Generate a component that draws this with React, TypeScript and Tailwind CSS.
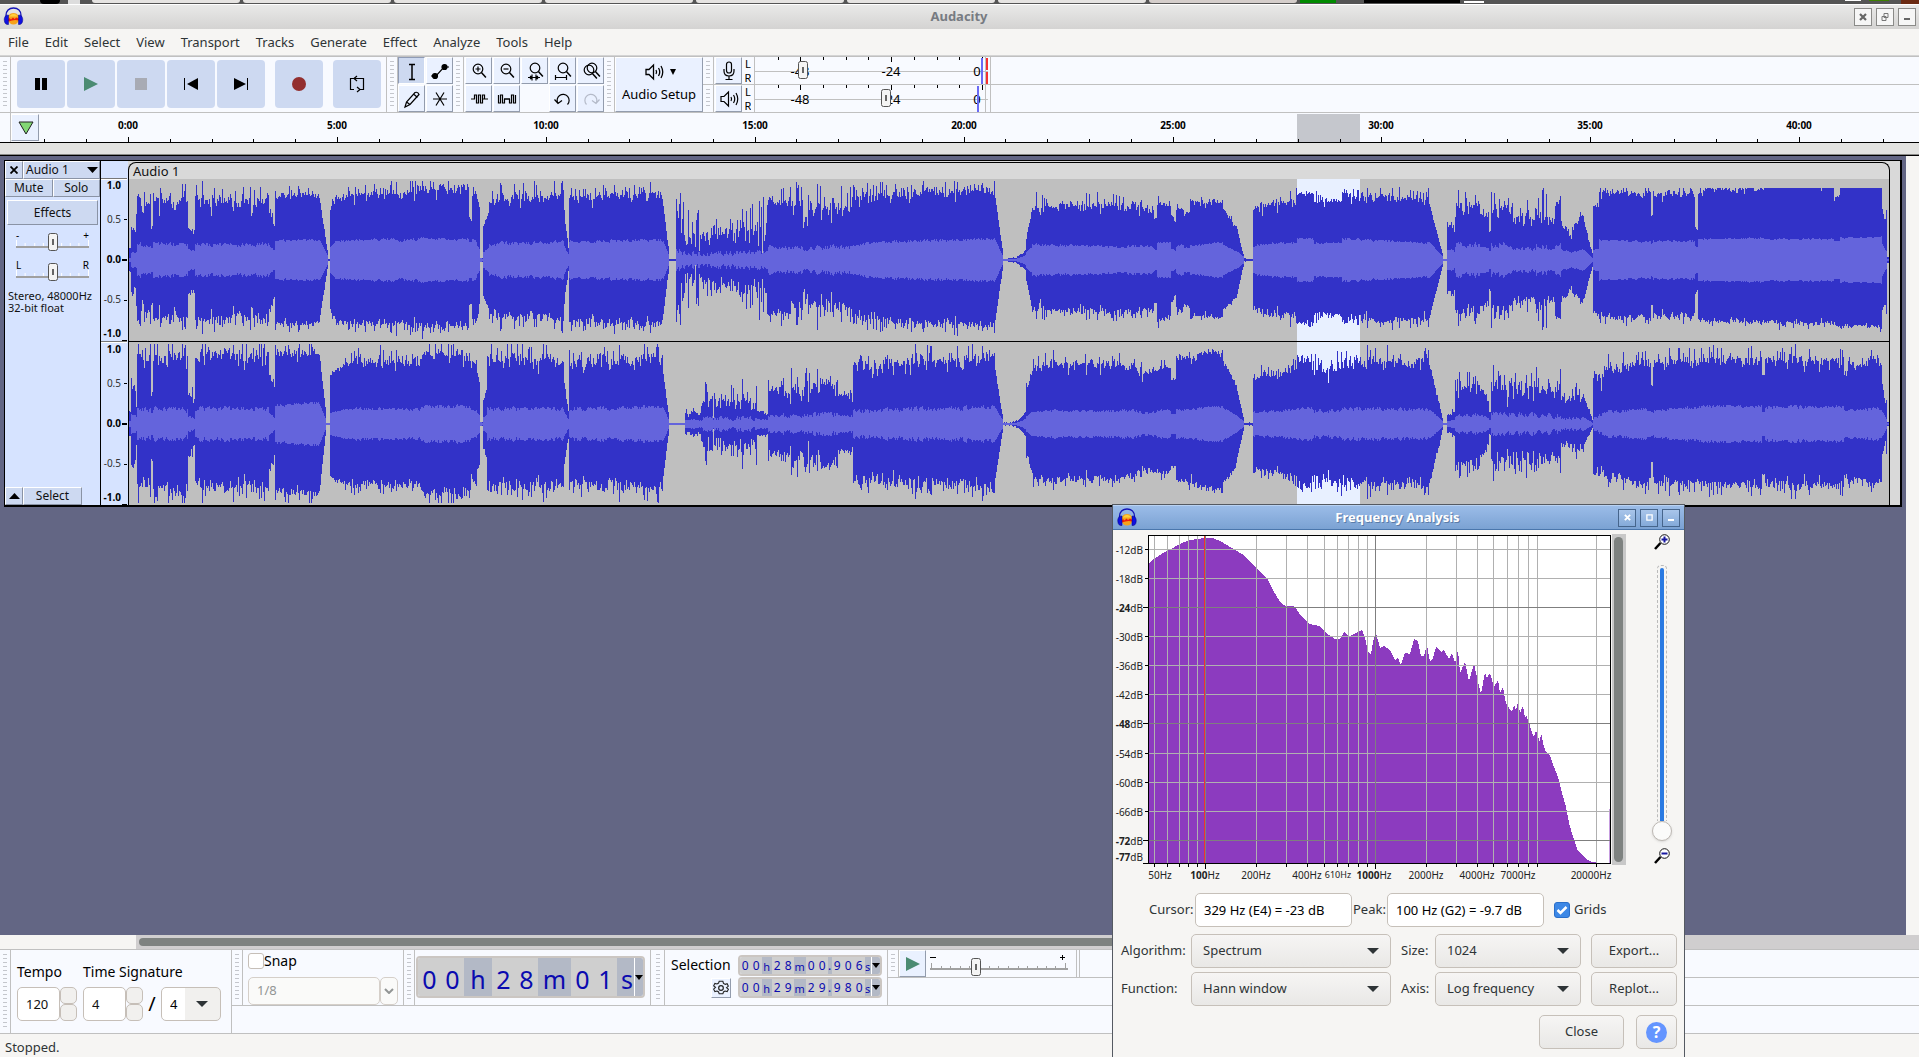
import React from "react";

/* ---------- small shared pieces ---------- */

function Logo({ className }: { className: string }) {
  return (
    <svg viewBox="0 0 20 20" className={className} aria-hidden="true">
      <path d="M5 13a5.5 5 0 1 1 10 0a5 4.500 0 0 1-10 0z" fill="#f6a21a" />
      <path d="M5.500 9.500Q10 4 14.500 9.500z" fill="#ffcf3a" />
      <path d="M4.500 13l1.500-2 1.500 1.500 2-2 1.500 1.500 2-1.500 2.500 1.500v1.500q-5-1.500-10.500 1z" fill="#ee1c0c" />
      <path d="M2.500 11.500V8.500C2.500 4 5.500 1 10 1s7.500 3 7.500 7.500v3" fill="none" stroke="#1414b8" strokeWidth="1.400" />
      <path d="M5 8C1.500 8 .5 11 .8 13.500 1 16.500 2.800 18 5 17.500z" fill="#1010e0" stroke="#05057a" strokeWidth=".5" />
      <path d="M15 8c3.500 0 4.500 3 4.200 5.500-.2 3-2 4.500-4.200 4z" fill="#1010e0" stroke="#05057a" strokeWidth=".5" />
    </svg>
  );
}

function Grabber({ className = "" }: { className?: string }) {
  return (
    <div className={"flex w-[11px] shrink-0 justify-center border-r border-[#c0c0c0] py-1 " + className}>
      <div className="w-1 bg-[repeating-linear-gradient(to_bottom,#c4c6cc_0px,#c4c6cc_1px,transparent_1px,transparent_4px)]" />
    </div>
  );
}

function ToolButton({
  label,
  children,
  pressed,
}: {
  label: string;
  children: React.ReactNode;
  pressed?: boolean;
}) {
  return (
    <button
      aria-label={label}
      className={
        "flex h-[27px] w-[27px] shrink-0 items-center justify-center border " +
        (pressed
          ? "border-[#8f9bb5] border-r-white border-b-white bg-[#cdd9f0]"
          : "border-white border-r-[#939cad] border-b-[#939cad] bg-[#eaf1ff]")
      }
    >
      <svg viewBox="0 0 24 24" className="h-6 w-6" fill="none" stroke="#000" strokeWidth="1.200">
        {children}
      </svg>
    </button>
  );
}

function SpeakerShape() {
  return (
    <>
      <path d="M4 9.500v5h3l4.500 4.500V5L7 9.500z" />
      <path d="M14 10q1.200 2 0 4M16.500 8q2.500 4 0 8M19 6q3.500 6 0 12" />
    </>
  );
}

function Thumb() {
  return (
    <svg viewBox="0 0 11 19" className="h-[19px] w-[11px]" aria-hidden="true">
      <rect x=".5" y=".5" width="9" height="17" rx="2" fill="#f4f4f4" stroke="#555" />
      <path d="M5 6v6" stroke="#666" strokeWidth="2" />
    </svg>
  );
}

/* ---------- title bar and menus ---------- */

const menus = ["File", "Edit", "Select", "View", "Transport", "Tracks", "Generate", "Effect", "Analyze", "Tools", "Help"];

function Desktop() {
  return (
    <div className="flex h-1 overflow-hidden bg-[#555]">
      <div className="flex w-[92px] shrink-0 gap-2 pl-10">
        <span className="w-5 rounded-b bg-black" />
        <span className="w-3 bg-[#ddd]" />
      </div>
      {[0, 1, 2, 3, 4, 5, 6, 7].map((i) => (
        <div
          key={i}
          className={"mr-[3px] h-[3px] w-[148px] shrink-0 rounded-b-sm " + (i === 7 ? "bg-[#d5cecb]" : "bg-[#e6e4e2]")}
        />
      ))}
      <div className="h-[3px] w-9 shrink-0 bg-[#008a00]" />
      <div className="ml-7 h-[3px] w-24 shrink-0 bg-black" />
      <div className="mt-px ml-1 h-[2px] w-5 shrink-0 bg-white" />
      <div className="flex flex-1 justify-end gap-2">
        <span className="h-px w-4 bg-white" />
        <span className="h-px w-5 bg-[#3c8000]" />
        <span className="ml-1 h-1 w-[18px] bg-[#6b2a12]" />
      </div>
    </div>
  );
}

const winBtn = "flex h-[18px] w-[18px] items-center justify-center border";

function TitleBar() {
  return (
    <header className="flex h-[25px] items-center border-t border-white bg-linear-to-b from-[#e9e9e8] to-[#d4d3d2] pr-[3px] pl-[3px]">
      <Logo className="h-5 w-[21px]" />
      <h1 className="flex-1 pl-10 text-center text-[13px] font-bold text-[#777b82]">Audacity</h1>
      <div className="flex gap-1">
        <button aria-label="Close window" className={winBtn + " border-[#8a8a88] bg-[#f6f6f6]"}>
          <svg viewBox="0 0 8 8" className="h-2 w-2" stroke="#666" strokeWidth="2.200">
            <path d="M1 1l6 6M7 1L1 7" />
          </svg>
        </button>
        <button aria-label="Restore window" className={winBtn + " border-[#8a8a88] bg-[#f6f6f6]"}>
          <svg viewBox="0 0 8 8" className="h-2 w-2" fill="none" stroke="#777">
            <path d="M3 .5h4v4H3zM1 3.500h4v4H1z" />
          </svg>
        </button>
        <button aria-label="Minimise window" className={winBtn + " border-[#8a8a88] bg-[#f6f6f6]"}>
          <svg viewBox="0 0 8 8" className="h-2 w-2">
            <path d="M1 5h6v2H1z" fill="#666" />
          </svg>
        </button>
      </div>
    </header>
  );
}

function MenuBar() {
  return (
    <nav className="flex h-[27px] items-center gap-4 border-b border-[#d4d4d4] pt-px pl-2">
      {menus.map((m) => (
        <button key={m} className="text-[13px] text-[#2e3436]">
          {m}
        </button>
      ))}
    </nav>
  );
}

/* ---------- upper toolbars ---------- */

function TransportButton({ label, children, className = "" }: { label: string; children: React.ReactNode; className?: string }) {
  return (
    <button aria-label={label} className={"flex h-12 w-12 items-center justify-center rounded bg-[#cdd9f1] " + className}>
      <svg viewBox="0 0 20 20" className="h-5 w-5">
        {children}
      </svg>
    </button>
  );
}

function Meter({ thumb, peak, clip, name }: { thumb: number; peak: number; clip: boolean; name: string }) {
  const ticks = [24, 46, 69, 92, 114, 137, 160, 183, 205, 228];
  return (
    <div className="relative h-[27px] w-[238px]">
      <svg className="h-full w-full font-['Noto_Sans',sans-serif]" role="img" aria-label={name}>
        <path d="M.5 0v27M231.500 0v27M236.500 0v27M0 14.500h234" stroke="#c0c0c0" />
        {ticks.map((t) => (
          <path key={t} d={`M${t}.5 0v${t === 46 || t === 137 || t === 228 ? 5 : 3}`} stroke="#000" />
        ))}
        <g fontSize="13" textAnchor="middle">
          <text x="46" y="19">-48</text>
          <text x="137" y="19">-24</text>
          <text x="223" y="19">0</text>
        </g>
        <rect x={peak} y="1" width="2" height="26" fill="#6a6af5" />
        {clip && <path d="M233 1v12M233 15v12" stroke="#f53030" strokeWidth="2" />}
      </svg>
      <div className="absolute top-1" style={{ left: thumb }}>
        <Thumb />
      </div>
    </div>
  );
}

function MeterRow({ input }: { input: boolean }) {
  return (
    <div className="flex h-7 border-b border-[#c0c0c0]">
      <Grabber />
      <div className="ml-px">
        <ToolButton label={input ? "Record meter" : "Playback meter"}>
          {input ? (
            <>
              <rect x="9.500" y="3" width="5" height="11" rx="2.500" />
              <path d="M7 10v2q0 5 5 5t5-5v-2M12 17v3M8.500 20.500h7" />
            </>
          ) : (
            <SpeakerShape />
          )}
        </ToolButton>
      </div>
      <div className="flex w-3 flex-col items-center text-[11px] leading-[13px]">
        <span className="h-[14px] overflow-hidden">L</span>
        <span className="h-[13px] overflow-hidden">R</span>
      </div>
      {input ? (
        <Meter name="Recording level" thumb={44} peak={227} clip />
      ) : (
        <Meter name="Playback level" thumb={127} peak={223} clip={false} />
      )}
    </div>
  );
}

function Lens({ x = 11, y = 10 }: { x?: number; y?: number }) {
  return (
    <>
      <circle cx={x} cy={y} r="4.800" />
      <path d={`M${x + 3.400} ${y + 3.400}l4.500 5`} strokeWidth="1.500" />
    </>
  );
}

function UpperToolbars() {
  return (
    <div className="flex h-[57px] border-y border-[#c0c0c0] bg-[#f8faff]">
      <Grabber />
      <div className="flex items-center gap-[2px] border-r border-[#c0c0c0] pr-[5px] pb-[2px] pl-[6px]">
        <TransportButton label="Pause"><path d="M4 4h5v12H4zM11 4h5v12h-5z" /></TransportButton>
        <TransportButton label="Play"><path d="M3 3l14 7-14 7z" fill="#4b8b72" /></TransportButton>
        <TransportButton label="Stop"><path d="M4 4h12v12H4z" fill="#a8abb4" /></TransportButton>
        <TransportButton label="Skip to start"><path d="M3.500 4v12" stroke="#000" /><path d="M17 4v12L6 10z" /></TransportButton>
        <TransportButton label="Skip to end"><path d="M16.500 4v12" stroke="#000" /><path d="M3 4v12l12-6z" /></TransportButton>
        <TransportButton label="Record" className="mx-2"><circle cx="10" cy="10" r="7" fill="#932f2f" /></TransportButton>
        <TransportButton label="Loop">
          <path d="M7 4.500H3.500V15.500H7M13 15.500h3.500V4.500H7.500M10 2L7 4.500 10 7M10 13l3 2.500-3 2.500" fill="none" stroke="#000" strokeWidth="1.200" />
        </TransportButton>
      </div>
      <Grabber />
      <div className="grid grid-cols-2 content-start gap-px">
        <ToolButton label="Selection tool" pressed><path d="M9 5.500h6M9 20.500h6M12 5.500v15" strokeWidth="1.500" /></ToolButton>
        <ToolButton label="Envelope tool"><path d="M3 17h5L16 8h5" /><circle cx="7" cy="17" r="2.500" fill="#000" /><circle cx="16.500" cy="8" r="2.500" fill="#000" /></ToolButton>
        <ToolButton label="Draw tool"><path d="M5 20l1.500-5L15 5.500q3-1 4 2L10 17.500zM13.500 7l4 3.500M6.500 15l3.500 2.500" /></ToolButton>
        <ToolButton label="Multi tool"><path d="M5 12h14M8 5.500l8 13M16 5.500l-8 13" /></ToolButton>
      </div>
      <Grabber />
      <div className="grid grid-cols-5 content-start gap-px pl-px">
        <ToolButton label="Zoom in"><Lens /><path d="M8.500 10h5M11 7.500v5" /></ToolButton>
        <ToolButton label="Zoom out"><Lens /><path d="M8.500 10h5" /></ToolButton>
        <ToolButton label="Fit selection to width"><Lens x={12} y={9} /><path d="M5 18.500h12M9 15.500v6M13 15.500v6M7 17l2 1.500L7 20M15 17l-2 1.500 2 1.500" /></ToolButton>
        <ToolButton label="Fit project to width"><Lens x={12} y={9} /><path d="M4.500 18.500h11M4.500 16v5M15.500 16v5" /></ToolButton>
        <ToolButton label="Zoom toggle"><Lens x={10} y={11} /><Lens x={13} y={9} /></ToolButton>
        <ToolButton label="Trim outside selection"><path d="M4 12h4M16 12h5" stroke="#555" strokeWidth="1.500" /><path d="M7.500 12V8h2v8h2V8h2v8h2V8h2v4" /></ToolButton>
        <ToolButton label="Silence selection"><path d="M3.500 8v8h2V8h2v8h2v-4M14.500 12v4h2V8h2v8h2V8" /><path d="M9 12h6" strokeWidth="1.500" /></ToolButton>
        <span />
        <ToolButton label="Undo"><path d="M7 16.500A6 6 0 1 1 16.500 17.500M3.500 12.500L7 16.500l4-3" /></ToolButton>
        <ToolButton label="Redo"><path d="M17 16.500A6 6 0 1 0 7.500 17.500M20.500 12.500L17 16.500l-4-3" stroke="#b4bac8" /></ToolButton>
      </div>
      <Grabber />
      <button className="flex w-[88px] flex-col items-center justify-center gap-px border border-white border-r-[#939cad] border-b-[#939cad] bg-[#eaf1ff] pb-1 text-[13px]">
        <span className="flex items-center gap-1">
          <svg viewBox="0 0 24 24" className="h-6 w-6" fill="none" stroke="#000" strokeWidth="1.300">
            <SpeakerShape />
          </svg>
          <svg viewBox="0 0 6 6" className="h-[6px] w-[6px]"><path d="M0 0h6L3 6z" /></svg>
        </span>
        Audio Setup
      </button>
      <div className="flex-1">
        <MeterRow input />
        <MeterRow input={false} />
      </div>
    </div>
  );
}

/* ---------- time ruler ---------- */

function TimeRuler() {
  const marks = [];
  for (let i = -2; i <= 43; i++) marks.push({ i, x: Math.round(117 + i * 41.78) });
  return (
    <div className="flex h-[30px] border-b border-black bg-[#f8faff]">
      <div className="w-[11px] shrink-0 border-r border-[#c0c0c0]" />
      <button aria-label="Timeline options" className="mt-px flex h-[27px] w-7 shrink-0 items-center justify-center border border-white border-r-[#939cad] border-b-[#939cad] bg-[#eaf1ff] pl-[2px]">
        <svg viewBox="0 0 16 14" className="h-[14px] w-4"><path d="M1 1h14L8 13z" fill="#82d874" stroke="#222" /></svg>
      </button>
      <svg className="-ml-7 h-[29px] min-w-0 flex-1 font-['Noto_Sans',sans-serif]" role="img" aria-label="Timeline">
        <rect x="1286" y="1" width="63" height="28" fill="#c5c7cd" />
        {marks.map(({ i, x }) => (
          <React.Fragment key={i}>
            <path d={`M${x}.5 29v-${i % 5 === 0 ? 5 : 3}`} stroke="#000" />
            {i >= 0 && i % 5 === 0 && (
              <text x={x} y="16" fontSize="10" fontWeight="700" textAnchor="middle">{i}:00</text>
            )}
          </React.Fragment>
        ))}
      </svg>
    </div>
  );
}

/* ---------- waveforms ---------- */

// start, end, top from/to, bottom from/to, rms from/to, roughness
type Seg = [number, number, number, number, number, number, number, number, number];

const left: Seg[] = [
  [128, 130, 12, 12, 12, 12, 2, 2, 1],
  [130, 136, 34, 30, 38, 34, 9, 9, 12],
  [136, 140, 68, 60, 62, 66, 15, 18, 6],
  [140, 143, 55, 50, 50, 45, 14, 14, 8],
  [143, 150, 62, 56, 58, 56, 15, 15, 9],
  [150, 152, 32, 36, 46, 40, 12, 12, 2],
  [152, 187, 60, 58, 58, 57, 17, 15, 10],
  [187, 194, 32, 27, 34, 30, 11, 8, 4],
  [194, 268, 58, 58, 60, 57, 15, 16, 10],
  [268, 274, 50, 28, 50, 32, 14, 8, 4],
  [274, 319, 63, 65, 63, 63, 19, 20, 6],
  [319, 327, 56, 3, 54, 3, 19, 3, 1],
  [327, 329, 1, 1, 1, 1, 0, 0, 0],
  [329, 335, 54, 62, 52, 60, 13, 19, 3],
  [335, 395, 63, 68, 63, 64, 19, 21, 6],
  [395, 440, 68, 72, 65, 67, 20, 22, 8],
  [440, 468, 73, 72, 67, 66, 21, 21, 7],
  [468, 471, 42, 40, 44, 44, 18, 18, 2],
  [471, 476, 68, 66, 62, 60, 22, 17, 5],
  [476, 479, 62, 50, 58, 40, 14, 10, 4],
  [479, 482, 2, 2, 2, 2, 2, 1, 0],
  [482, 488, 34, 50, 36, 50, 7, 13, 3],
  [488, 563, 60, 64, 55, 59, 16, 18, 9],
  [563, 568, 46, 8, 40, 8, 14, 4, 3],
  [568, 663, 62, 66, 61, 64, 18, 20, 7],
  [663, 669, 54, 4, 54, 4, 19, 4, 1],
  [669, 676, 1, 1, 1, 1, 0, 0, 0],
  [676, 681, 45, 50, 45, 50, 9, 9, 12],
  [681, 700, 24, 28, 22, 25, 7, 7, 18],
  [700, 735, 29, 27, 26, 24, 6, 7, 18],
  [735, 768, 31, 30, 30, 30, 8, 8, 18],
  [768, 790, 60, 58, 54, 54, 13, 12, 10],
  [790, 852, 54, 52, 46, 46, 12, 13, 13],
  [852, 875, 62, 64, 56, 60, 14, 18, 7],
  [875, 995, 66, 71, 62, 66, 18, 21, 7],
  [995, 1003, 62, 3, 60, 3, 20, 3, 1],
  [1003, 1012, 1, 2, 1, 2, 1, 1, 0],
  [1012, 1026, 2, 12, 2, 12, 1, 6, 1],
  [1026, 1032, 24, 48, 22, 46, 9, 12, 3],
  [1032, 1066, 52, 54, 48, 52, 15, 14, 7],
  [1066, 1110, 56, 52, 52, 49, 15, 13, 7],
  [1110, 1150, 55, 54, 54, 52, 13, 14, 7],
  [1150, 1157, 50, 38, 50, 40, 14, 9, 4],
  [1157, 1171, 56, 56, 60, 58, 17, 18, 5],
  [1171, 1176, 46, 37, 44, 34, 12, 9, 3],
  [1176, 1184, 50, 54, 50, 52, 14, 16, 4],
  [1184, 1190, 46, 48, 44, 48, 12, 12, 3],
  [1190, 1223, 58, 58, 56, 57, 14, 18, 5],
  [1223, 1236, 50, 34, 49, 38, 15, 9, 3],
  [1236, 1244, 34, 2, 38, 2, 9, 3, 1],
  [1244, 1253, 1, 1, 1, 1, 0, 0, 1],
  [1253, 1297, 54, 57, 52, 55, 15, 17, 8],
  [1297, 1314, 67, 66, 64, 64, 22, 21, 5],
  [1314, 1342, 59, 60, 55, 55, 17, 17, 5],
  [1342, 1372, 65, 66, 61, 60, 21, 21, 6],
  [1372, 1429, 64, 61, 62, 59, 20, 17, 6],
  [1429, 1443, 56, 3, 58, 3, 18, 3, 1],
  [1443, 1447, 1, 1, 1, 1, 1, 1, 0],
  [1447, 1456, 33, 30, 30, 33, 9, 9, 7],
  [1456, 1481, 52, 58, 52, 56, 16, 15, 12],
  [1481, 1490, 45, 38, 46, 38, 13, 11, 4],
  [1490, 1492, 28, 30, 28, 34, 9, 9, 1],
  [1492, 1513, 52, 56, 54, 54, 15, 16, 12],
  [1513, 1537, 44, 38, 42, 35, 12, 10, 11],
  [1537, 1548, 50, 46, 52, 48, 14, 13, 14],
  [1548, 1556, 44, 40, 42, 40, 11, 11, 8],
  [1556, 1562, 58, 60, 60, 60, 15, 16, 8],
  [1562, 1573, 36, 26, 40, 30, 10, 8, 6],
  [1573, 1585, 32, 44, 34, 40, 8, 10, 5],
  [1585, 1594, 38, 2, 38, 2, 10, 1, 1],
  [1594, 1600, 54, 52, 52, 54, 10, 11, 3],
  [1600, 1652, 68, 66, 57, 58, 20, 18, 5],
  [1652, 1654, 44, 46, 44, 46, 16, 17, 1],
  [1654, 1696, 66, 67, 56, 56, 19, 19, 5],
  [1696, 1699, 32, 29, 34, 28, 14, 12, 1],
  [1699, 1704, 66, 68, 58, 60, 21, 21, 3],
  [1704, 1765, 72, 71, 62, 62, 21, 22, 4],
  [1765, 1835, 75, 75, 62, 64, 21, 21, 4],
  [1835, 1841, 60, 64, 64, 66, 19, 18, 3],
  [1841, 1883, 77, 77, 66, 67, 22, 23, 4],
  [1883, 1887, 50, 36, 50, 42, 16, 8, 2],
  [1887, 1888, 50, 50, 54, 54, 9, 9, 0],
  [1888, 1890, 3, 3, 3, 3, 1, 1, 0],
];

const right: Seg[] = [
  [128, 130, 13, 12, 12, 12, 3, 3, 1],
  [130, 136, 40, 38, 42, 42, 9, 9, 14],
  [136, 150, 68, 66, 62, 60, 15, 14, 12],
  [150, 152, 28, 36, 36, 38, 11, 11, 2],
  [152, 187, 66, 66, 66, 66, 16, 14, 11],
  [187, 194, 30, 24, 32, 22, 8, 5, 5],
  [194, 268, 67, 66, 60, 63, 15, 15, 11],
  [268, 274, 50, 35, 48, 32, 12, 6, 4],
  [274, 319, 71, 71, 69, 69, 19, 21, 8],
  [319, 325, 60, 8, 58, 3, 18, 3, 2],
  [325, 329, 1, 1, 1, 1, 1, 1, 0],
  [329, 345, 51, 60, 54, 60, 11, 15, 4],
  [345, 420, 62, 63, 60, 62, 15, 15, 8],
  [420, 470, 68, 69, 68, 70, 17, 18, 10],
  [470, 476, 62, 62, 55, 62, 14, 13, 6],
  [476, 479, 50, 42, 46, 40, 11, 8, 4],
  [479, 482, 2, 2, 2, 2, 2, 1, 0],
  [482, 486, 22, 40, 22, 40, 6, 10, 4],
  [486, 563, 63, 63, 61, 61, 15, 15, 11],
  [563, 568, 40, 7, 40, 8, 12, 3, 3],
  [568, 663, 62, 65, 60, 64, 15, 17, 10],
  [663, 669, 50, 4, 52, 3, 16, 3, 1],
  [669, 685, 1, 1, 1, 1, 1, 1, 1],
  [685, 701, 10, 12, 9, 11, 4, 4, 3],
  [701, 757, 22, 24, 21, 24, 5, 6, 13],
  [757, 768, 14, 10, 12, 12, 5, 4, 3],
  [768, 783, 34, 34, 30, 28, 8, 8, 6],
  [783, 838, 34, 38, 34, 38, 8, 10, 14],
  [838, 853, 28, 30, 26, 28, 8, 8, 5],
  [853, 880, 58, 56, 56, 56, 13, 13, 10],
  [880, 995, 60, 67, 58, 64, 14, 17, 11],
  [995, 1003, 54, 3, 54, 3, 16, 3, 1],
  [1003, 1012, 1, 2, 1, 2, 1, 1, 1],
  [1012, 1026, 2, 14, 2, 14, 1, 6, 1],
  [1026, 1033, 36, 56, 30, 52, 8, 13, 4],
  [1033, 1120, 59, 60, 56, 55, 13, 13, 7],
  [1120, 1157, 58, 52, 53, 46, 14, 11, 7],
  [1157, 1171, 57, 58, 50, 48, 14, 14, 5],
  [1171, 1176, 44, 44, 42, 42, 10, 10, 2],
  [1176, 1223, 66, 70, 56, 66, 14, 17, 7],
  [1223, 1236, 62, 40, 58, 44, 16, 9, 4],
  [1236, 1244, 38, 2, 38, 2, 9, 2, 1],
  [1244, 1253, 1, 1, 1, 1, 0, 0, 1],
  [1253, 1297, 48, 55, 47, 53, 12, 14, 8],
  [1297, 1314, 66, 64, 64, 62, 16, 16, 9],
  [1314, 1342, 56, 56, 56, 58, 13, 13, 9],
  [1342, 1430, 62, 63, 59, 62, 15, 15, 9],
  [1430, 1443, 56, 3, 56, 3, 14, 2, 2],
  [1443, 1447, 1, 1, 1, 1, 1, 1, 0],
  [1447, 1456, 9, 12, 8, 12, 3, 4, 2],
  [1456, 1481, 34, 42, 40, 42, 8, 9, 9],
  [1481, 1490, 36, 22, 32, 20, 9, 6, 4],
  [1490, 1492, 12, 12, 10, 12, 4, 4, 1],
  [1492, 1537, 40, 37, 38, 40, 10, 9, 14],
  [1537, 1562, 34, 38, 34, 36, 8, 8, 12],
  [1562, 1585, 26, 27, 20, 25, 5, 6, 7],
  [1585, 1594, 26, 2, 20, 2, 6, 1, 1],
  [1594, 1605, 46, 46, 48, 48, 5, 11, 9],
  [1605, 1652, 54, 62, 52, 60, 12, 15, 8],
  [1652, 1654, 38, 40, 38, 40, 12, 12, 1],
  [1654, 1700, 60, 63, 58, 60, 13, 17, 8],
  [1700, 1763, 65, 62, 60, 60, 18, 17, 8],
  [1763, 1766, 48, 50, 50, 50, 12, 12, 2],
  [1766, 1845, 64, 63, 60, 62, 17, 17, 8],
  [1845, 1866, 56, 60, 56, 56, 14, 15, 6],
  [1866, 1883, 63, 62, 60, 58, 15, 15, 8],
  [1883, 1887, 40, 14, 30, 14, 12, 5, 2],
  [1887, 1888, 24, 24, 30, 30, 5, 5, 0],
  [1888, 1890, 2, 2, 2, 2, 1, 1, 0],
];

function random(seed: number) {
  let s = seed;
  return () => {
    s = (s * 1664525 + 1013904223) % 4294967296;
    return s / 4294967296;
  };
}

function wavePaths(segs: Seg[], mid: number, seed: number, ceiling: (x: number) => number) {
  const rnd = random(seed);
  const peakTop: string[] = [];
  const peakBottom: string[] = [];
  const rmsTop: string[] = [];
  const rmsBottom: string[] = [];
  let shared = 0;
  for (const [x0, x1, t0, t1, b0, b1, r0, r1, rough] of segs) {
    for (let x = x0; x < x1; x++) {
      const linear = (x - x0) / Math.max(1, x1 - x0);
      const f = t0 <= 2 && t1 > 5 ? linear * linear : linear;
      // neighbouring columns keep part of the same level, so peaks come in short runs
      shared = shared * 0.35 + (rnd() * 2 - 1) * 0.8;
      const kick = rnd();
      const spike = kick > 0.88 ? rough * 1.3 : kick < 0.06 ? -rough * 0.9 : 0;
      const wobble = () => (shared * 0.6 + (rnd() * 2 - 1) * 0.4) * rough;
      const top = Math.min(ceiling(x), Math.max(1, Math.round(t0 + (t1 - t0) * f + wobble() + spike)));
      const bottom = Math.min(79, Math.max(1, Math.round(b0 + (b1 - b0) * f + wobble() * 0.9 + spike * 0.8)));
      const rms = Math.max(0, r0 + (r1 - r0) * f + shared * Math.min(3, rough * 0.25));
      const a = Math.min(top, Math.round(rms));
      const b = Math.min(bottom, Math.round(rms));
      peakTop.push(`L${x} ${mid - top}H${x + 1}`);
      peakBottom.unshift(`L${x + 1} ${mid + bottom}H${x}`);
      rmsTop.push(`L${x} ${mid - a}H${x + 1}`);
      rmsBottom.unshift(`L${x + 1} ${mid + b}H${x}`);
    }
  }
  const start = `M128 ${mid}`;
  return {
    peak: start + peakTop.join("") + peakBottom.join("") + "Z",
    rms: start + rmsTop.join("") + rmsBottom.join("") + "Z",
  };
}

// the last song is limited, so its upper peaks stay flat
const waves = [
  wavePaths(left, 81, 11, (x) => (x > 1595 ? 72 : 79)),
  wavePaths(right, 245, 97, () => 80),
];

function Waveform() {
  return (
    <svg viewBox="128 0 1762 326" preserveAspectRatio="none" shapeRendering="crispEdges" className="block h-[326px] w-full bg-[#bfbfbf]" role="img" aria-label="Stereo waveform">
      <rect x="1297" y="0" width="63" height="326" fill="#e8f0ff" />
      {waves.map((w, i) => (
        <g key={i}>
          <path d={w.peak} fill="#3232c8" />
          <path d={w.rms} fill="#6464dc" />
        </g>
      ))}
      <path d="M128 162.500h1762" stroke="#000" />
    </svg>
  );
}

/* ---------- track ---------- */

const panelBtn = "border border-white border-r-[#8a93a5] border-b-[#8a93a5] bg-[#cdd9f1] text-xs text-[#111]";

function PanelSlider({ name, low, high }: { name: string; low: string; high: string }) {
  return (
    <div className="relative mx-[11px] h-[30px]" role="group" aria-label={name}>
      <div className="flex justify-between text-[10px] leading-[10px]">
        <span>{low}</span>
        <span>{high}</span>
      </div>
      <svg viewBox="0 0 76 8" preserveAspectRatio="none" className="block h-2 w-full" shapeRendering="crispEdges">
        <path d="M.5 0v6M9.500 3v3M19.500 3v3M28.500 3v3M47.500 3v3M56.500 3v3M65.500 3v3M75.500 0v6" stroke="#fff" />
        <path d="M0 7h76" stroke="#a0a0a0" strokeWidth="2" />
      </svg>
      <div className="absolute top-[3px] left-8">
        <Thumb />
      </div>
    </div>
  );
}

function TrackPanel() {
  return (
    <div className="flex w-[95px] shrink-0 flex-col bg-[#d6e3ff]">
      <div className="flex h-[18px]">
        <button aria-label="Delete track" className={"flex w-[18px] items-center justify-center " + panelBtn}>
          <svg viewBox="0 0 8 8" className="h-2 w-2" stroke="#000" strokeWidth="1.800"><path d="M.5.5l7 7M7.500.5l-7 7" /></svg>
        </button>
        <button className={"flex flex-1 items-center justify-between pr-px pl-[2px] leading-4 " + panelBtn}>
          Audio 1
          <svg viewBox="0 0 11 6" className="h-[6px] w-[11px]"><path d="M0 0h11L5.500 6z" /></svg>
        </button>
      </div>
      <div className="flex h-[18px]">
        <button className={"flex-1 leading-4 " + panelBtn}>Mute</button>
        <button className={"flex-1 leading-4 " + panelBtn}>Solo</button>
      </div>
      <button className={"mx-[2px] mt-[3px] mb-[5px] h-[25px] " + panelBtn}>Effects</button>
      <PanelSlider name="Gain" low="-" high="+" />
      <PanelSlider name="Pan" low="L" high="R" />
      <div className="pl-[3px] text-[11px] leading-3 text-[#111]">
        Stereo, 48000Hz
        <br />
        32-bit float
      </div>
      <div className="mt-auto flex h-[18px]">
        <button aria-label="Collapse" className={"flex w-[18px] items-center justify-center " + panelBtn}>
          <svg viewBox="0 0 11 6" className="h-[6px] w-[11px]"><path d="M0 6h11L5.500 0z" /></svg>
        </button>
        <button className={"w-[59px] leading-4 " + panelBtn}>Select</button>
      </div>
    </div>
  );
}

function AmplitudeScale() {
  const labels: [string, number, boolean][] = [["1.0", 7, true], ["0.5", 41, false], ["0.0", 81, true], ["-0.5", 121, false], ["-1.0", 155, true]];
  return (
    <svg className="h-[344px] w-7 shrink-0 border-l border-black bg-[#d6e3ff] font-['Noto_Sans',sans-serif]" role="img" aria-label="Amplitude scale">
      <path d="M0 17.500h26M0 180.500h26" stroke="#777" />
      <path d="M0 18.500h26M0 181.500h26" stroke="#fff" />
      {[17, 181].map((base) => (
        <g key={base} fontSize="10">
          {labels.map(([t, y, bold]) => (
            <text key={t} x="20" y={base + y + 4} textAnchor="end" fontWeight={bold ? 700 : 400} fill={bold ? "#000" : "#333"}>{t}</text>
          ))}
          <path d={`M21 ${base + 82}h5`} stroke="#000" strokeWidth="2" />
          <path d={`M23 ${base + 41}.5h3M23 ${base + 122}.5h3M21 ${base + 162}.5h5`} stroke="#000" />
        </g>
      ))}
    </svg>
  );
}

function Track() {
  return (
    <section className="mr-1 ml-1 flex border border-r-2 border-b-2 border-black bg-[#d9d9d9]" aria-label="Audio 1">
      <TrackPanel />
      <AmplitudeScale />
      <div className="min-w-0 flex-1 pt-px">
        <div className="rounded-t-lg border-x border-t border-black">
          <div className="h-4 pl-1 text-[13px] leading-[17px] text-[#111]">Audio 1</div>
          <Waveform />
        </div>
      </div>
      <div className="w-[10px] shrink-0" />
    </section>
  );
}

/* ---------- lower toolbars ---------- */

const spinInput = "rounded-[5px] border border-[#c6bfb8] bg-white px-2 text-[13px] text-[#111]";

function Spinner({ label, value }: { label: string; value: string }) {
  return (
    <div className="flex h-[34px]">
      <input aria-label={label} defaultValue={value} className={"w-[43px] " + spinInput} />
      <div className="flex w-[17px] flex-col">
        <button aria-label={label + " up"} className="flex-1 rounded-[5px] border border-[#c6bfb8] bg-[#f1f0ee]" />
        <button aria-label={label + " down"} className="flex-1 rounded-[5px] border border-[#c6bfb8] bg-[#f1f0ee]" />
      </div>
    </div>
  );
}

function TimeField({ text, big, label }: { text: string; big?: boolean; label: string }) {
  return (
    <div role="group" aria-label={label} className={"flex overflow-hidden rounded-[4px] border-2 border-[#cbc6c2] text-[#0a0aaf] " + (big ? "h-[42px] text-[25px] leading-[42px]" : "h-[21px] text-xs leading-[17px]")}>
      {text.split("").map((c, i) => {
        const digit = c >= "0" && c <= "9";
        const width = big
          ? digit ? "w-[23px]" : c === "s" ? "w-[17px] pl-[3px]" : c === "m" ? "w-[33px]" : "w-7"
          : digit ? "w-[11px]" : c === "." ? "w-1" : c === "s" ? "w-[6px] text-[11px] leading-[19px]" : c === "m" ? "w-3 text-[11px] leading-[19px]" : "w-[10px] text-[11px] leading-[19px]";
        return (
          <span key={i} className={"shrink-0 text-center " + width + (digit ? " bg-[#cfcfcf]" : " bg-[#b3b9c6]")}>{c}</span>
        );
      })}
      <button aria-label={label + " format"} className="flex w-[9px] shrink-0 items-center justify-center border-l border-white bg-[#b3b9c6]">
        <svg viewBox="0 0 8 5" className="h-[5px] w-2"><path d="M0 0h8L4 5z" /></svg>
      </button>
    </div>
  );
}

function LowerToolbars() {
  return (
    <div className="flex h-[85px] border-y border-[#c0c0c0] bg-[#f8faff]">
      <Grabber />
      <div className="flex w-[221px] shrink-0 gap-[6px] border-r border-[#c0c0c0] pt-3 pl-[6px] text-sm">
        <div className="flex flex-col gap-[5px]">
          <span className="leading-5">Tempo</span>
          <Spinner label="Tempo" value="120" />
        </div>
        <div className="flex flex-col gap-[5px]">
          <span className="leading-5 whitespace-nowrap">Time Signature</span>
          <div className="flex items-center">
            <Spinner label="Beats per measure" value="4" />
            <span className="w-[18px] text-center text-xl">/</span>
            <div className="flex h-[34px] w-[60px] items-center rounded-[5px] border border-[#c6bfb8] bg-linear-to-r from-white from-40% to-[#f1f0ee] to-40% pr-3">
              <select aria-label="Beat unit" defaultValue="4" className="h-full min-w-0 flex-1 appearance-none pl-2 text-[13px]"><option>4</option></select>
              <svg viewBox="0 0 12 6" className="h-[6px] w-3"><path d="M0 0h12L6 6z" fill="#2e3436" /></svg>
            </div>
          </div>
        </div>
      </div>
      <div className="min-w-0 flex-1">
        <div className="flex h-14">
          <div className="flex flex-1 border-b border-[#c0c0c0]">
            <Grabber />
            <div className="flex w-[161px] shrink-0 flex-col justify-between border-r border-[#c0c0c0] pt-[2px] pl-[5px]">
              <label className="flex items-center text-sm leading-[17px]">
                <input type="checkbox" className="h-4 w-4 appearance-none rounded-[3px] border border-[#c6bfb8] bg-white" />
                Snap
              </label>
              <div className="flex h-7">
                <select disabled aria-label="Snap to" defaultValue="1/8" className="w-[132px] appearance-none rounded-[5px] border border-[#d5cfc9] bg-[#fafaf9] px-2 text-[13px] text-[#929595] opacity-100"><option>1/8</option></select>
                <span className="flex w-[18px] items-center justify-center rounded-[5px] border border-[#d5cfc9] bg-[#fafaf9]">
                  <svg viewBox="0 0 10 6" className="h-[6px] w-[10px]" fill="none" stroke="#929595" strokeWidth="2"><path d="M1 1l4 4 4-4" /></svg>
                </span>
              </div>
            </div>
            <Grabber />
            <div className="flex w-[236px] shrink-0 border-r border-[#c0c0c0] pt-[6px] pl-px">
              <TimeField big label="Audio position" text="00h28m01s" />
            </div>
            <Grabber className="w-[14px]!" />
            <div className="flex shrink-0 gap-[7px] border-r border-[#c0c0c0] pr-[5px] pl-[6px]">
              <div className="flex flex-col items-end gap-1 pt-[6px]">
                <span className="text-sm leading-[18px]">Selection</span>
                <button aria-label="Selection settings" className="flex h-5 w-5 items-center justify-center border border-white border-r-[#939cad] border-b-[#939cad] bg-[#eaf1ff]">
                  <svg viewBox="0 0 24 24" className="h-4 w-4" fill="none" stroke="#222" strokeWidth="1.800">
                    <path d="M9 2h6l1 3.500 3 1.500 3-1 2 4-3 2.500 3 2.500-2 4-3.500-1-2.500 1.500-1 3H9l-1-3-2.500-1.500-3.500 1-2-4L3 12 0 9.500l2-4 3.500 1L8 5z" transform="translate(1 0) scale(.92)" />
                    <circle cx="12" cy="12" r="3.500" />
                  </svg>
                </button>
              </div>
              <div className="flex flex-col gap-px pt-[5px]">
                <TimeField label="Selection start" text="00h28m00.906s" />
                <TimeField label="Selection end" text="00h29m29.980s" />
              </div>
            </div>
          </div>
          <div className="flex min-w-0 basis-[1031px] flex-col border-b border-[#c0c0c0]">
            <div className="flex h-7 shrink-0 border-b border-[#c0c0c0]">
              <Grabber />
              <button aria-label="Play at speed" className="flex w-[27px] shrink-0 items-center justify-center border border-white border-r-[#939cad] border-b-[#939cad] bg-[#eaf1ff]">
                <svg viewBox="0 0 14 14" className="h-[14px] w-[14px]"><path d="M0 0l14 7-14 7z" fill="#4b8b72" /></svg>
              </button>
              <div className="relative w-[151px] shrink-0 border-r border-[#c0c0c0]">
                <svg className="h-full w-full" shapeRendering="crispEdges" role="img" aria-label="Playback speed">
                  <path d="M5.500 13v6M15.500 16v3M24.500 16v3M34.500 16v3M43.500 16v3M63.500 16v3M72.500 16v3M82.500 16v3M92.500 16v3M101.500 16v3M111.500 16v3M120.500 16v3M129.500 16v3M139.500 13v6" stroke="#a0a0a0" />
                  <path d="M4 19h138" stroke="#a0a0a0" strokeWidth="2" />
                  <path d="M4 7.500h6M134 7.500h5M136.500 5v5" stroke="#000" />
                </svg>
                <div className="absolute top-2 left-[45px]"><Thumb /></div>
              </div>
              <div className="w-[3px] border-r border-[#c0c0c0]" />
            </div>
          </div>
        </div>
        <div className="h-7" />
      </div>
    </div>
  );
}

/* ---------- frequency analysis window ---------- */

const curve =
  "M0 328L1 28 6 24 15 18 23 14 32 9 41 5 50 4 56 3 65 3 74 7 84 13 94 19 101 26 108 33 119 43 126 57 133 68 138 71 146 71 154 82 162 89 171 91 178 98 187 104 192 104 196 97 201 102 206 99 214 95 217 102 220 117 223 119 226 102 228 98 232 113 236 111 242 115 247 125 250 123 253 130 257 118 262 119 266 104 270 106 273 121 276 121 279 110 282 127 285 123 288 112 293 117 296 115 301 124 304 118 307 128 310 115 312 138 317 127 321 146 326 129 330 147 333 159 337 137 339 143 342 138 346 152 350 145 352 158 355 152 357 164 359 170 364 177 366 170 368 175 370 167 372 178 375 171 377 183 379 180 380 188 381 185 383 195 386 202 388 196 392 207 393 197 395 208 398 217 402 221 406 232 410 242 414 258 418 272 421 288 425 302 430 316 438 324 444 327 452 328Z";

const dbLines: [number, number][] = [[-12, 14], [-18, 43], [-24, 72], [-30, 101], [-36, 130], [-42, 159], [-48, 188], [-54, 218], [-60, 247], [-66, 276], [-72, 305]];
const hzLines = [6, 19, 31, 40, 49, 108, 138, 159, 176, 189, 200, 210, 219, 278, 308, 329, 345, 359, 370, 380, 389, 448];
const hzTicks = [...hzLines, 57, 227];
const hzLabels: [string, number][] = [["50", 12], ["200", 108], ["400", 159], ["2000", 278], ["4000", 329], ["7000", 370], ["20000", 443]];

function SpectrumPlot() {
  return (
    <svg className="h-[349px] w-[498px] shrink-0 font-['Noto_Sans',sans-serif]" role="img" aria-label="Spectrum">
      <g transform="translate(34 1)">
        <rect x="0" y="0" width="463" height="329" fill="#fff" />
        <path d={curve} fill="#8c3bbf" shapeRendering="crispEdges" />
        <path d="M462 274v54" stroke="#8c3bbf" />
        <g shapeRendering="crispEdges">
          {hzLines.map((x) => <path key={x} d={`M${x}.5 0v328`} stroke="#b0b0b0" />)}
          {dbLines.map(([db, y]) => <path key={db} d={`M0 ${y}.5h463`} stroke={db % 24 === 0 ? "#7f7f7f" : "#b0b0b0"} />)}
          <path d="M57.500 0v328M227.500 0v328" stroke="#7f7f7f" />
          <path d="M56.500 0v328" stroke="#f03030" />
          <path d="M.5 .5h462v328H.5z" fill="none" stroke="#000" />
          {hzTicks.map((x) => <path key={x} d={`M${x}.5 329v${x === 57 || x === 227 ? 5 : 3}`} stroke="#000" />)}
          {dbLines.map(([db, y]) => <path key={db} d={`M0 ${y}.5h-${db % 24 === 0 ? 5 : 3}`} stroke="#000" />)}
          <path d="M0 328.500h-5" stroke="#000" />
        </g>
      </g>
      <g fontSize="10" fill="#222" textAnchor="end">
        {[...dbLines, [-77, 321] as [number, number]].map(([db, y]) => (
          <text key={db} x="29" y={y + 6}>
            <tspan fontWeight={db % 24 === 0 || db === -77 ? 700 : 400}>{db}</tspan>dB
          </text>
        ))}
      </g>
      <g fontSize="10" fill="#222" textAnchor="middle">
        {hzLabels.map(([t, x]) => <text key={t} x={x + 34} y="345">{t}Hz</text>)}
        <text x="91" y="345"><tspan fontWeight="700">100</tspan>Hz</text>
        <text x="224" y="344" fontSize="9">610Hz</text>
        <text x="260" y="345"><tspan fontWeight="700">1000</tspan>Hz</text>
      </g>
    </svg>
  );
}

function Magnifier({ plus }: { plus?: boolean }) {
  return (
    <svg viewBox="0 0 16 16" className="h-4 w-4" aria-hidden="true">
      <path d="M1 15l5.500-6" stroke="#000" strokeWidth="2.500" />
      <circle cx="10.500" cy="5.500" r="4.800" fill="#fff" stroke="#111" />
      <path d={plus ? "M7.500 5.500h6M10.500 2.500v6" : "M7.500 5.500h6"} stroke="#1818a0" strokeWidth="2" />
    </svg>
  );
}

const raised = "h-[34px] rounded-[5px] border border-[#c6c0b9] bg-linear-to-b from-[#f6f5f4] to-[#e9e8e6] text-[13px] text-[#2e3436]";

function Choice({ id, label, value, width, labelWidth }: { id: string; label: string; value: string; width: string; labelWidth: string }) {
  return (
    <>
      <label htmlFor={id} className={"shrink-0 " + labelWidth}>{label}</label>
      <div className={"relative shrink-0 " + width}>
        <select id={id} defaultValue={value} className={"w-full appearance-none pl-[11px] " + raised}><option>{value}</option></select>
        <svg viewBox="0 0 12 6" className="pointer-events-none absolute top-[14px] right-3 h-[6px] w-3"><path d="M0 0h12L6 6z" fill="#2e3436" /></svg>
      </div>
    </>
  );
}

function FrequencyWindow() {
  const btn = winBtn + " border-[#46658c] bg-linear-to-b from-[#a9c5ea] to-[#84aad9]";
  const field = "h-[34px] w-[157px] rounded-[5px] border border-[#c6c0b9] bg-white px-2 text-[13px] text-black";
  return (
    <section role="dialog" aria-label="Frequency Analysis" className="absolute top-[504px] right-[234px] bottom-0 w-[573px] overflow-hidden border border-b-0 border-[#555a62] bg-[#f6f5f3] text-[13px] text-[#2e3436]">
      <header className="flex h-[25px] items-center border-t border-b border-t-[#b9d2f2] border-b-[#4a76ac] bg-linear-to-b from-[#9bbce8] to-[#7ba2d3] pr-1 pl-1">
        <Logo className="h-5 w-5" />
        <h2 className="flex-1 pl-10 text-center text-[13px] font-bold text-white [text-shadow:1px_1px_0_#5b7ca8]">Frequency Analysis</h2>
        <div className="flex gap-1">
          <button aria-label="Close dialog" className={btn}>
            <svg viewBox="0 0 8 8" className="h-[7px] w-[7px]" stroke="#fff" strokeWidth="2.200"><path d="M1 1l6 6M7 1L1 7" /></svg>
          </button>
          <button aria-label="Maximise dialog" className={btn}>
            <svg viewBox="0 0 8 8" className="h-[7px] w-[7px]" fill="none" stroke="#fff" strokeWidth="1.500"><path d="M1 1h6v6H1z" /></svg>
          </button>
          <button aria-label="Minimise dialog" className={btn}>
            <svg viewBox="0 0 8 8" className="h-2 w-2"><path d="M1 5h6v2H1z" fill="#fff" /></svg>
          </button>
        </div>
      </header>
      <div className="flex pt-1 pl-px">
        <SpectrumPlot />
        <div className="h-[331px] w-[14px] shrink-0 bg-[#c8c8c8] px-[2px] py-[3px]">
          <div className="h-full w-[9px] rounded-full bg-[#7e8280]" />
        </div>
        <div className="ml-[26px] flex flex-col items-center">
          <Magnifier plus />
          <div className="mt-[15px] flex h-[276px] w-5 flex-col items-center">
            <div className="w-[10px] flex-1 rounded-t border-x border-t border-dashed border-[#bbb] px-[2px] pt-[2px]">
              <div className="h-full w-1 rounded-t bg-[#2a7ae2]" />
            </div>
            <div className="h-5 w-5 rounded-full border border-[#bdb8b3] bg-[#fbfbfa] shadow-sm" />
          </div>
          <div className="mt-[7px]"><Magnifier /></div>
        </div>
      </div>
      <div className="mt-[10px] flex items-center pl-9">
        <label htmlFor="cursor" className="w-[46px]">Cursor:</label>
        <input id="cursor" readOnly defaultValue="329 Hz (E4) = -23 dB" className={field} />
        <label htmlFor="peak" className="w-[35px] pl-px">Peak:</label>
        <input id="peak" readOnly defaultValue="100 Hz (G2) = -9.7 dB" className={field} />
        <label className="ml-[10px] flex items-center gap-1">
          <span className="relative flex">
            <input type="checkbox" defaultChecked className="h-4 w-4 appearance-none rounded-[3px] border border-[#2a6fc9] bg-[#3d88e6]" />
            <svg viewBox="0 0 16 16" className="pointer-events-none absolute inset-0 h-4 w-4" fill="none" stroke="#fff" strokeWidth="2.500"><path d="M3.500 8l3 3 6-6" /></svg>
          </span>
          Grids
        </label>
      </div>
      <div className="mt-[7px] flex items-center pl-2">
        <Choice id="algorithm" label="Algorithm:" value="Spectrum" width="w-[200px]" labelWidth="w-[70px]" />
        <Choice id="size" label="Size:" value="1024" width="w-[146px]" labelWidth="ml-[10px] w-[34px]" />
        <button className={"ml-[10px] w-[86px] " + raised}>Export...</button>
      </div>
      <div className="mt-1 flex items-center pl-2">
        <Choice id="function" label="Function:" value="Hann window" width="w-[200px]" labelWidth="w-[70px]" />
        <Choice id="axis" label="Axis:" value="Log frequency" width="w-[146px]" labelWidth="ml-[10px] w-[34px]" />
        <button className={"ml-[10px] w-[86px] " + raised}>Replot...</button>
      </div>
      <div className="mt-[9px] flex justify-end gap-3 pr-[7px]">
        <button className={"w-[85px] " + raised}>Close</button>
        <button aria-label="Help" className={"flex w-[41px] items-center justify-center " + raised}>
          <span className="flex h-[21px] w-[21px] items-center justify-center rounded-full bg-[#6495ff] text-base font-bold text-white">?</span>
        </button>
      </div>
    </section>
  );
}

/* ---------- page ---------- */

export default function App() {
  return (
    <div className="relative flex min-h-screen flex-col overflow-hidden bg-[#f6f5f3] font-['Noto_Sans',sans-serif] text-black">
      <Desktop />
      <TitleBar />
      <MenuBar />
      <UpperToolbars />
      <TimeRuler />
      <div className="h-3 border-b border-[#8a8a88] bg-[#e3e3e1]" />
      <main className="flex flex-1 flex-col border-t border-black">
        <div className="flex flex-1">
          <div className="min-w-0 flex-1 bg-[#636684] pt-1">
            <Track />
          </div>
          <div className="w-[13px] shrink-0" />
        </div>
        <div className="flex h-[14px]">
          <div className="w-[136px] shrink-0" />
          <div className="flex-1 bg-[#d0cecf] py-[3px] pl-[3px]">
            <div className="h-2 w-3/5 rounded-full bg-[#7e8280]" />
          </div>
        </div>
      </main>
      <LowerToolbars />
      <footer className="h-[23px] pl-[5px] text-[13px] leading-[27px] text-[#2e3436]">Stopped.</footer>
      <FrequencyWindow />
    </div>
  );
}
